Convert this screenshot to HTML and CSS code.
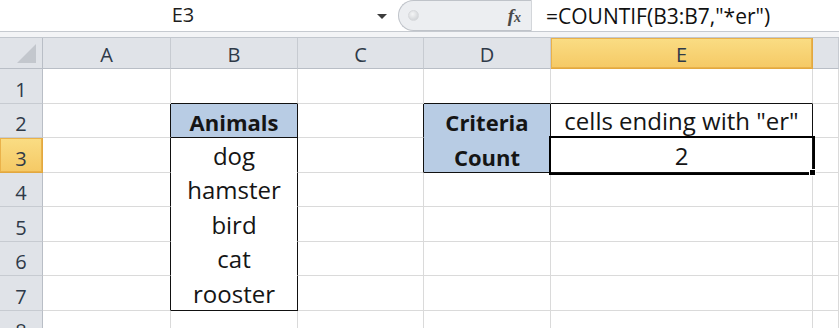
FILE: index.html
```html
<!DOCTYPE html>
<html lang="en">
<head>
    <meta charset="UTF-8">
    <title>COUNTIF ending with er</title>
    <link rel="stylesheet" href="styles.css">
</head>
<body>
    <div class="formula-bar">
        <div class="name-box">E3</div>
        <div class="name-arrow"><span class="arrow"></span></div>
        <div class="fx-area">
            <span class="knob"></span>
            <span class="fx">f<span class="fx-x">x</span></span>
        </div>
        <div class="formula">=COUNTIF(B3:B7,"*er")</div>
    </div>
    <div class="strip"></div>

    <div class="sheet">
        <!-- column headers -->
        <div class="corner"><span class="corner-tri"></span></div>
        <div class="col-head">A</div>
        <div class="col-head">B</div>
        <div class="col-head">C</div>
        <div class="col-head">D</div>
        <div class="col-head active">E</div>
        <div class="col-head"></div>

        <!-- row 1 -->
        <div class="row-head">1</div>
        <div class="cell"></div>
        <div class="cell edge-b"></div>
        <div class="cell"></div>
        <div class="cell edge-b"></div>
        <div class="cell edge-b"></div>
        <div class="cell"></div>

        <!-- row 2 -->
        <div class="row-head">2</div>
        <div class="cell edge-r"></div>
        <div class="cell head-fill edge-r edge-b">Animals</div>
        <div class="cell edge-r"></div>
        <div class="cell head-fill edge-r fill-b">Criteria</div>
        <div class="cell edge-r edge-b">cells ending with "er"</div>
        <div class="cell"></div>

        <!-- row 3 -->
        <div class="row-head active">3</div>
        <div class="cell edge-r"></div>
        <div class="cell edge-r no-b">dog</div>
        <div class="cell edge-r"></div>
        <div class="cell head-fill edge-r edge-b">Count</div>
        <div class="cell edge-r edge-b selected">2<span class="handle"></span></div>
        <div class="cell"></div>

        <!-- row 4 -->
        <div class="row-head">4</div>
        <div class="cell edge-r"></div>
        <div class="cell edge-r no-b">hamster</div>
        <div class="cell"></div>
        <div class="cell"></div>
        <div class="cell"></div>
        <div class="cell"></div>

        <!-- row 5 -->
        <div class="row-head">5</div>
        <div class="cell edge-r"></div>
        <div class="cell edge-r no-b">bird</div>
        <div class="cell"></div>
        <div class="cell"></div>
        <div class="cell"></div>
        <div class="cell"></div>

        <!-- row 6 -->
        <div class="row-head">6</div>
        <div class="cell edge-r"></div>
        <div class="cell edge-r no-b">cat</div>
        <div class="cell"></div>
        <div class="cell"></div>
        <div class="cell"></div>
        <div class="cell"></div>

        <!-- row 7 -->
        <div class="row-head">7</div>
        <div class="cell edge-r"></div>
        <div class="cell edge-r edge-b">rooster</div>
        <div class="cell"></div>
        <div class="cell"></div>
        <div class="cell"></div>
        <div class="cell"></div>

        <!-- row 8 -->
        <div class="row-head">8</div>
        <div class="cell"></div>
        <div class="cell"></div>
        <div class="cell"></div>
        <div class="cell"></div>
        <div class="cell"></div>
        <div class="cell"></div>
    </div>
</body>
</html>
```

FILE: styles.css
```css
* {
    margin: 0;
    padding: 0;
    box-sizing: border-box;
}

body {
    width: 839px;
    height: 328px;
    overflow: hidden;
    background: #ffffff;
    font-family: 'Open Sans', 'Liberation Sans', sans-serif;
    color: #1a1a1a;
}

/* Formula bar */
.formula-bar {
    display: flex;
    height: 31px;
    background: #ffffff;
}

.name-box {
    width: 366px;
    font-size: 20px;
    line-height: 30px;
    text-align: center;
    color: #1e1e1e;
}

.name-arrow {
    width: 32px;
    display: flex;
    align-items: center;
    justify-content: center;
}

.arrow {
    width: 0;
    height: 0;
    border-left: 5px solid transparent;
    border-right: 5px solid transparent;
    border-top: 5px solid #3c3c3c;
    margin-top: 1px;
}

.fx-area {
    width: 134px;
    height: 31px;
    display: flex;
    align-items: center;
    background: #eceef1;
    border: 1px solid #bfc3c9;
    border-right-color: #d3d6da;
    border-radius: 16px 0 0 16px;
}

.knob {
    width: 11px;
    height: 11px;
    margin-left: 9px;
    border-radius: 50%;
    background: radial-gradient(circle at 40% 35%, #f4f5f6, #c9ccd0);
    border: 1px solid #d7d9dc;
}

.fx {
    margin-left: auto;
    margin-right: 10px;
    font-family: 'Liberation Serif', serif;
    font-style: italic;
    font-weight: bold;
    font-size: 19px;
    color: #4a4a4a;
}

.fx-x {
    font-size: 14px;
}

.formula {
    flex: 1;
    padding-left: 14px;
    font-size: 21px;
    line-height: 31px;
    padding-top: 1px;
    color: #111;
}

.strip {
    height: 7px;
    border-top: 1px solid #c6cad0;
    border-bottom: 1px solid #c2c7ce;
    background: #f3f4f6;
}

/* Grid */
.sheet {
    display: grid;
    grid-template-columns: 43px 128px 127px 126px 127px 262px 1fr;
    grid-template-rows: 31px repeat(8, 34.5px);
}

.corner,
.col-head,
.row-head {
    background: #e0e3e8;
    border-right: 1px solid #b9bec6;
    border-bottom: 1px solid #b9bec6;
    color: #2f3a48;
    font-size: 20px;
    display: flex;
    align-items: flex-end;
    justify-content: center;
}

.corner {
    position: relative;
}

.corner-tri {
    position: absolute;
    right: 6px;
    bottom: 5px;
    width: 0;
    height: 0;
    border-left: 19px solid transparent;
    border-bottom: 19px solid #c3c7cd;
}

.col-head {
    border-right-color: #c7cbd1;
}

.row-head {
    border-bottom-color: #c7cbd1;
}

.col-head.active,
.row-head.active {
    background: linear-gradient(#fadd84, #f5c965);
    box-shadow: inset 0 0 0 1px #eab24a;
    border-color: #e2a83f;
}

.cell {
    border-right: 1px solid #dadada;
    border-bottom: 1px solid #dadada;
    font-size: 24px;
    display: flex;
    align-items: flex-end;
    justify-content: center;
    white-space: nowrap;
    color: #151515;
}

.head-fill {
    background: #b8cce4;
    font-weight: bold;
    font-size: 22px;
}

.edge-r {
    border-right-color: #111;
}

.edge-b {
    border-bottom-color: #111;
}

.no-b {
    border-bottom-color: #ffffff;
}

.fill-b {
    border-bottom-color: #b8cce4;
}

/* Active cell */
.selected {
    position: relative;
    box-shadow: 0 0 0 2px #000, inset 0 0 0 1px #ffffff;
}

.handle {
    position: absolute;
    right: -4px;
    bottom: -4px;
    width: 7px;
    height: 7px;
    background: #000;
    border: 1px solid #fff;
}
```
